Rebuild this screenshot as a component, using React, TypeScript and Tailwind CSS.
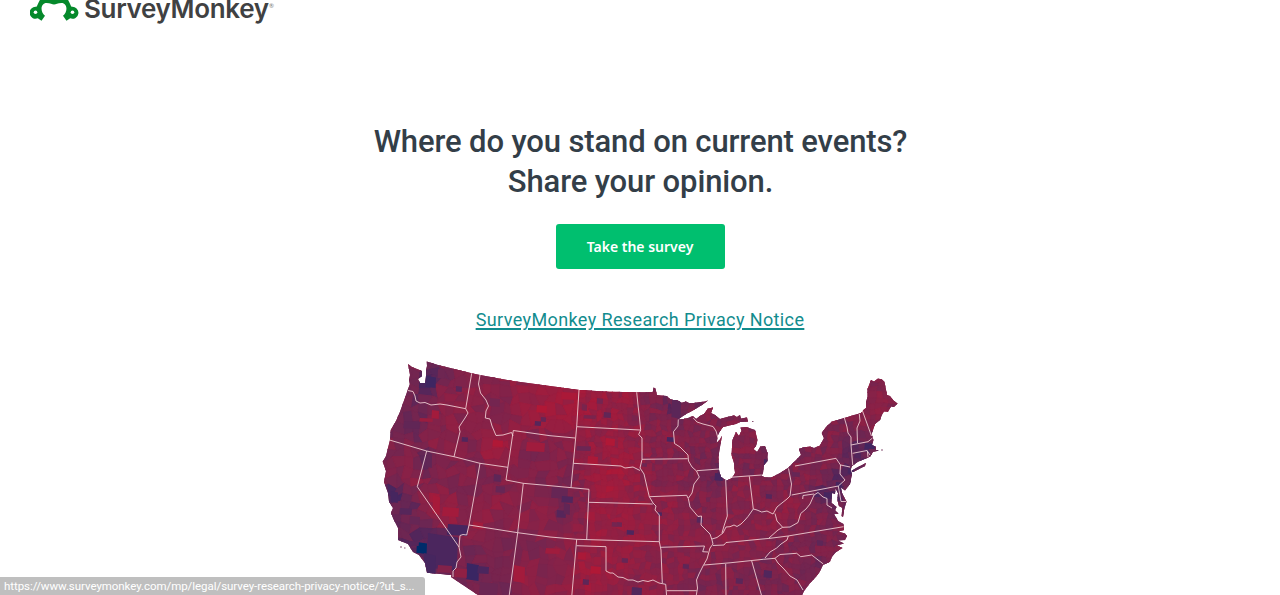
const LAND =
  'M408 364 412 367 417 369 422 371 422 376 418 379 420 383 425 383 426 376 426 370 427 366 426.7 361.5 438 365 471.7 373.3 480 375 513 381 550 386 579 390 610 391.7 636.7 392.3 652.7 392.3 653.5 387.5 655.5 388.5 656.7 395 661 395.5 666.7 396 670 399 673 400 677 400 681.7 402.7 686 401.5 690 403.5 697 402.5 705 401.5 708 400.5 702 405 692 411 686 414 678 419.5 683.5 419 688 418 693 416 696 419 700 416 704 414 708 408.5 713 407.5 711 413 715 415 720 419 727 417 734 415.5 737 417 740 415 741 418.5 747 417.5 748 421.5 740 422 736 424 727 426 723 427 720 431 718 435 716.5 443 719.5 440 722 436 720 447 718.5 456 719 470 721 477 726.7 480.5 732 478 735 473 734 463 731.5 455 732.5 440 736 432 739 436 741.5 431 740.5 427.5 746 427 755 430 757.5 440 756 446 753.5 449 757 452 760.5 446.5 765 446 767.5 453 767.5 461 764 465 763 473 761.5 476 766 477.5 771.5 477.5 780 473 788 468 796 460 801 455 799 449 803 447.5 810 446.5 814 448 820 445.5 824 438 821.7 433 826 427 831.7 421.7 845 417.7 861 413 864 409.5 866 408 866 402 867.5 397 867.5 389 871 380 874 381.5 878 378.5 882 379.5 884.5 382 887 395 890 396 893 400 897.5 403.5 894 407 891 406.5 888 411.7 884 411.5 881.7 415 880 420 875 424 873 430 871.5 434 873.5 440 872 445 876 446.7 876 450 879 450.5 873 452 870 456.7 858 461.7 852 466 850.5 470 852 474 850 484 845 490.5 841 487.5 842 493 846.5 501.5 844 510 843 517 841.5 516 842.5 508 839 506 837.5 500 838 493 835.5 488.5 835 494 832 493 831.5 503 836.7 507 835 510 838.5 514 834 514 838 521 843.5 524 844 530 838 531.5 845 533.5 847 536 845 540 838 540.5 844 543.5 836.7 545.5 842.5 548 836 552 831.7 557 830 561.7 823 565 819 573 814 579 810 583 804 591 800 600 486 600 478 595 451 577 451.5 575 427 572.7 425 563 419 555 413 552 408 544 398 540 398 528 394 520 391 513 393 508 389 501.7 388 493 384 482 386 471 382.7 461.7 386 456 390 440 390.7 430 396 421 400 411.7 406.7 393 408 389 410 384 409 380 410 375Z'

const LONG_ISLAND = 'M851.5 471 857 467.5 866 463 865 466 859 469 853 472Z'

const BORDERS = [
  // West
  '408 390.5 413 391.5 415 396 416 401 420 403 425 402.5 431 405 440 404 447 405 465.7 408.7',
  '471.7 373.3 465.7 408.7 468 413 465 418 459 427 460 431.7 454 456.7',
  '389.5 440 426.7 451 454 456.7 480 463.3 507.7 467.3',
  '480 375 478.5 384 480.5 393 486 400 488.5 406 486 411 485.3 418 490 419 492 426 496 435.5 503 435 511.5 432.5 513 436',
  '550 435.7 513.3 430.5 506 480 523.3 483.3 550 485.7 589 489.3',
  '426.7 451 417.3 486.7 459 547',
  '480 463.3 469 525 466.7 535 463 534.5 460 535.5 459 547 461 557 457 562 456 568 453 571 453 577',
  '469 525 517.7 532.7 550 537 576.7 539.3 659.3 541.7',
  '523.3 483.3 517.7 532.7 509 597',
  // Plains
  '550 435.7 575 438',
  '579 390 576.7 426.7 573.3 463.3 571 487.5',
  '576.7 426.7 640 430',
  '573.3 463.3 621 466 625 468 633 467 640 470.5',
  '636.7 392.3 638 405 639.5 418 640.7 430 638.7 434.5 642 438 642 459.3 640 468 644 474 647 487 649.3 496.7 653 503 656 506 655 510 659.3 515 659.3 541.7 661 550 662.3 583',
  '642 459.3 687.7 458.7',
  '649.3 496.7 686.7 495.3 688 498',
  '589 489.3 586.7 539.5',
  '589 502.3 652.7 504',
  '576.7 539.3 571.7 597',
  '576.7 545.7 606 546.7 606 571 610 573 613 573 618 577 623 577.5 628 580 633 580 638 582 643 580.5 648 581.5 653 580 659 583 665.7 584.3 666.7 597',
  '666.7 590.7 696.7 590.7',
  '660.7 547.3 704.5 546 702.7 551.7 708 552',
  // Mississippi
  '678.3 419.5 678 426 673.5 431.7 674.5 443.5 680 447 688 455 688.5 461 692 467 696.5 471 699.3 477 694 484 692 493 688.3 498.3 690 507 698 516.5 701.5 516 701 525 706 530 710 534 712 540 713 544 710 548 707 559 703 566 699 574 696.5 580 697.5 588 696 597',
  '693.3 418 697 422 703 424 713 426.5 716 431 718 438',
  '696.7 470.7 719.3 469',
  // Ohio valley
  '725.7 480 727.3 516 724 526 722 533',
  '712 539 717 537.5 723 533 726 527 730 526.7 734 525 737 526.5 741 524 745 520 748 516.5 753.3 509 757 510 761.7 512 767 511 773 514 777 507 780 504.5 787 499 790 496 791.5 484 788.5 468.5',
  '749.3 476.3 753.3 509',
  '730 477.3 761.7 475',
  '713 545.5 724 545 726 542.5 770 538.3 788 536 843.5 526.7',
  '704 565 730 562.8 763.3 559.3 775 558.3 780 554.5 796.7 553.3 800.7 556.7 811.7 555 823.3 564',
  '788.3 536 787 540 781 544 776.7 548 770 552 765 558',
  '769 538 778 530 782.7 527.3 777 521 775 513.5',
  '782.7 527.3 790 527 798 522.5 800.7 513.5 806 509 810 504 814 495 818 492.5 823 497 827 498.5 827 505 832 508',
  '814 494 803 495.5 802.7 499',
  '775 558.3 778 563 784 569 790 576 797 580 803 590',
  '725.7 564 726 597',
  '751.7 561 762 597',
  // Northeast
  '791.7 495 838.3 486 841 501.5 846 501.5',
  '838.3 486 845 480 840 474 840.5 465 836 458.3 795 466',
  '840.7 465 850 467',
  '844.3 417.7 847 427 848 433 851 437 851 445 852.7 465',
  '859.3 414 860 421 857 428 857.5 443',
  '862.5 411 871.5 436',
  '851 445 868 441.7 872.5 438',
  '852.7 453.3 867 450.5 870 455',
  '867.3 450.7 868 457',
]

// Lean samples across the map: x, y, value (0 = red, 1 = blue)
const LEANS = [
  [410, 374, 0.5], [430, 382, 0.78], [450, 380, 0.45], [446, 398, 0.35], [402, 425, 0.6],
  [418, 422, 0.58], [440, 425, 0.35], [440, 447, 0.35], [475, 390, 0.3], [472, 432, 0.25],
  [470, 445, 0.45], [497, 450, 0.15], [400, 455, 0.4], [389, 466, 0.5], [430, 462, 0.58],
  [450, 480, 0.42], [435, 500, 0.22], [410, 475, 0.3], [394, 498, 0.75], [412, 510, 0.62],
  [402, 525, 0.6], [412, 537, 0.65], [445, 515, 0.25], [437, 545, 0.76], [490, 400, 0.35],
  [505, 415, 0.35], [540, 410, 0.12], [530, 395, 0.28], [560, 415, 0.15], [565, 400, 0.12],
  [535, 455, 0.42], [555, 448, 0.42], [530, 472, 0.44], [490, 480, 0.44], [497, 510, 0.3],
  [482, 520, 0.32], [545, 500, 0.36], [560, 500, 0.58], [575, 512, 0.38], [540, 525, 0.34],
  [490, 545, 0.48], [500, 565, 0.44], [480, 560, 0.5], [535, 550, 0.44], [530, 575, 0.3],
  [550, 570, 0.38], [495, 585, 0.5], [590, 405, 0.18], [610, 420, 0.22], [620, 400, 0.2],
  [600, 445, 0.25], [620, 450, 0.2], [610, 480, 0.1], [600, 520, 0.18], [630, 525, 0.22],
  [620, 560, 0.24], [590, 570, 0.16], [650, 565, 0.34], [655, 415, 0.38], [675, 405, 0.62],
  [660, 440, 0.36], [670, 475, 0.36], [670, 520, 0.3], [680, 565, 0.34], [700, 440, 0.42],
  [700, 460, 0.44], [710, 490, 0.42], [717, 480, 0.62], [738, 490, 0.35], [745, 445, 0.36],
  [750, 465, 0.48], [765, 460, 0.55], [770, 495, 0.38], [740, 535, 0.32], [765, 520, 0.35],
  [790, 510, 0.32], [810, 520, 0.44], [810, 480, 0.38], [825, 465, 0.44], [830, 440, 0.4],
  [850, 430, 0.45], [865, 425, 0.4], [877, 400, 0.34], [862, 448, 0.72], [858, 460, 0.65],
  [845, 475, 0.6], [838, 485, 0.7], [826, 495, 0.7], [800, 545, 0.46], [815, 560, 0.5],
  [790, 560, 0.42], [765, 575, 0.5], [740, 580, 0.42], [715, 580, 0.46], [840, 532, 0.42],
]

// Counties that stand out: x, y, width, height, lean
const SPOTS = [
  [426, 376, 10, 12, 0.9], [417, 542, 10, 12, 1.2], [409, 541, 10, 5, 0.75], [428, 533, 30, 38, 0.82],
  [448, 524, 20, 12, 0.85], [424, 553, 12, 22, 0.85], [438, 565, 14, 8, 0.42], [467, 563, 12, 18, 0.92],
  [478, 566, 11, 8, 0.82], [552, 487, 16, 12, 0.65], [562, 496, 11, 7, 0.78], [557, 510, 9, 8, 0.75],
  [564, 503, 6, 12, 0.68], [494, 474, 7, 8, 0.7], [496, 486, 9, 7, 0.65], [427, 452, 5, 16, 0.68],
  [462, 437, 6, 5, 0.78], [456, 386, 6, 6, 0.72], [438, 369, 7, 10, 0.6], [391, 491, 7, 12, 0.85],
  [400, 508, 12, 7, 0.75], [410, 516, 10, 9, 0.65], [672, 399, 9, 20, 0.72], [667, 437, 7, 5, 0.85],
  [604, 412, 7, 6, 0.68], [597, 398, 6, 6, 0.55], [584, 415, 12, 4, 0.5], [577, 446, 14, 5, 0.62],
  [627, 530, 7, 5, 0.8], [617, 522, 5, 5, 0.6], [632, 587, 10, 9, 0.78], [583, 579, 6, 6, 0.7],
  [622, 558, 6, 5, 0.65], [535, 421, 6, 5, 0.75], [541, 417, 5, 5, 0.65], [715, 473, 8, 8, 0.85],
  [697, 517, 6, 6, 0.75], [683, 564, 6, 5, 0.7], [764, 459, 5, 9, 0.85], [766, 494, 6, 5, 0.75],
  [817, 540, 6, 6, 0.7], [764, 570, 8, 8, 0.78], [736, 578, 7, 6, 0.72], [792, 472, 8, 5, 0.65],
  [848, 468, 6, 6, 0.85], [836, 482, 6, 5, 0.85], [824, 492, 8, 7, 0.85], [865, 443, 10, 6, 0.88],
  [658, 512, 4, 4, 0.8], [642, 463, 5, 4, 0.6], [480, 582, 18, 14, 0.62], [455, 568, 12, 10, 0.3],
  [404, 421, 16, 8, 0.68], [420, 418, 13, 4, 0.2], [432, 410, 7, 9, 0.12], [443, 507, 16, 10, 0.12],
  [433, 495, 7, 20, 0.08], [473, 522, 10, 7, 0.12], [527, 442, 18, 10, 0.15], [546, 548, 14, 6, 0.15],
  [514, 565, 11, 18, 0.12], [493, 440, 10, 7, 0], [537, 405, 10, 8, 0], [562, 392, 15, 8, 0.05],
  [588, 456, 10, 9, 0.05], [606, 438, 9, 8, 0], [591, 566, 10, 8, 0], [578, 552, 8, 8, 0.05],
  [490, 398, 10, 9, 0.55], [582, 404, 5, 7, 0.5], [632, 415, 6, 6, 0.5], [612, 522, 6, 5, 0.55],
]

const noise = (a: number, b: number) => {
  const n = Math.sin(a * 127.1 + b * 311.7) * 43758.5453
  return n - Math.floor(n)
}

const RAMP = [
  [176, 24, 54],
  [144, 32, 68],
  [110, 38, 82],
  [62, 38, 98],
  [0, 44, 106],
]

const leanColor = (value: number) => {
  const t = Math.max(0, Math.min(1.2, value)) / 0.3
  const i = Math.min(3, Math.floor(t))
  const f = t - i
  const [r, g, b] = RAMP[i].map((c, k) => Math.round(c + (RAMP[i + 1][k] - c) * f))
  return `rgb(${r},${g},${b})`
}

const leanAt = (x: number, y: number) => {
  let total = 0
  let sum = 0
  for (const [px, py, v] of LEANS) {
    const w = 1 / ((x - px) ** 2 + (y - py) ** 2 + 25) ** 1.6
    total += w
    sum += w * v
  }
  return sum / total
}

interface Patch {
  points: string
  fill: string
}

// Skewed mosaic of cells: wide in the west, small in the east
const buildPatches = () => {
  const patches: Patch[] = []
  const fill = (x0: number, x1: number, size: number, spread: number, jitter: number) => {
    const cols = Math.ceil((x1 - x0) / size)
    const rows = Math.ceil(240 / size)
    const corner = (c: number, r: number) => {
      const x = x0 + c * size + (noise(c + x0, r) - 0.5) * size * jitter
      const y = 360 + r * size + (noise(r, c + x0 + 9) - 0.5) * size * jitter
      return `${x.toFixed(1)},${y.toFixed(1)}`
    }
    for (let r = -1; r < rows; r++) {
      for (let c = 0; c < cols; c++) {
        const x = x0 + (c + 0.5) * size
        const y = 360 + (r + 0.5) * size
        const value = leanAt(x, y) + 0.03 + (noise(c + x0 * 3, r * 1.7) - 0.5) * spread
        patches.push({
          points: [corner(c, r), corner(c + 1, r), corner(c + 1, r + 1), corner(c, r + 1)].join(' '),
          fill: leanColor(value),
        })
      }
    }
  }
  fill(376, 584, 9, 0.22, 0.8)
  fill(574, 910, 5.5, 0.26, 0.7)
  return patches
}

const patches = buildPatches()

function CountyMap() {
  return (
    <svg viewBox="380 355 520 240" className="block h-[240px] w-[520px] shrink-0" role="img" aria-label="United States">
      <defs>
        <clipPath id="land">
          <path d={LAND} />
          <path d={LONG_ISLAND} />
        </clipPath>
      </defs>
      <g clipPath="url(#land)">
        <rect x="380" y="355" width="520" height="240" fill="#86224a" />
        {patches.map((patch, i) => (
          <polygon key={i} points={patch.points} fill={patch.fill} stroke={patch.fill} strokeWidth="1" />
        ))}
        {SPOTS.map(([x, y, w, h, lean], i) => (
          <polygon
            key={i}
            points={`${x},${y} ${x + w},${y + h * 0.12} ${x + w * 0.96},${y + h} ${x - w * 0.06},${y + h * 0.9}`}
            fill={leanColor(lean)}
          />
        ))}
      </g>
      <g fill="none" stroke="#f3d5d8" strokeOpacity="0.85" strokeWidth="1" strokeLinejoin="round">
        {BORDERS.map((points) => (
          <polyline key={points} points={points} />
        ))}
      </g>
      <path d="M400 547h2M404 548h1.5M881 450h2M752 421.500h1.500" stroke="#6b2850" strokeWidth="0.8" />
    </svg>
  )
}

function Logo() {
  return (
    <svg viewBox="0 0 250 30" className="block h-[30px] w-[250px]" aria-label="SurveyMonkey">
      <path
        d="M11.500 20.800 7.800 18.300A6 6 0 1 1 6.500 6.800C9 3 10 -7 24 -7S39 3 41.500 6.800A6 6 0 1 1 40.200 18.300L36.500 20.800 33 15.800C38.500 11 37 3 31.500 3C27.500 3 26 4.500 24 4.500S20.500 3 16.500 3C11 3 9.500 11 15 15.800Z"
        fill="#05892b"
      />
      <circle cx="5.500" cy="12.300" r="1.800" fill="#fff" />
      <circle cx="42.500" cy="12.300" r="1.800" fill="#fff" />
      <text x="54" y="18.200" textLength="185" className="fill-[#404142] font-['Inter'] text-[26px] font-semibold">
        SurveyMonkey
      </text>
      <text x="239" y="8" className="fill-[#777] font-['Lato'] text-[6px]">
        ®
      </text>
    </svg>
  )
}

export default function App() {
  return (
    <div className="relative flex h-[595px] flex-col overflow-hidden bg-white font-['Roboto',sans-serif]">
      <header className="h-[122px] shrink-0 pl-[30px]">
        <Logo />
      </header>

      <main className="flex flex-col items-center">
        <h1 className="pl-px text-center text-[31px] leading-10 font-medium tracking-[-0.12px] whitespace-nowrap text-[#333e48]">
          Where do you stand on current events?
          <br />
          Share your opinion.
        </h1>
        <button className="mt-[22px] h-[45px] w-[169px] rounded-[3px] bg-[#00bf6f] font-['Noto_Sans',sans-serif] text-sm font-semibold text-white">
          Take the survey
        </button>
        <a
          href="#"
          className="mt-[38px] mb-[22px] text-lg leading-[26px] tracking-[0.39px] text-[#128c8e] underline decoration-[1.5px] underline-offset-2"
        >
          SurveyMonkey Research Privacy Notice
        </a>
        <CountyMap />
      </main>

      {/* Browser link status */}
      <div className="absolute bottom-0 left-0 flex h-[18px] w-[425px] items-center rounded-tr-[3px] bg-[#bfbfbf] pt-px pl-1 text-[11.5px] tracking-[-0.055px] whitespace-nowrap text-white">
        https://www.surveymonkey.com/mp/legal/survey-research-privacy-notice/?ut_s...
      </div>
    </div>
  )
}
